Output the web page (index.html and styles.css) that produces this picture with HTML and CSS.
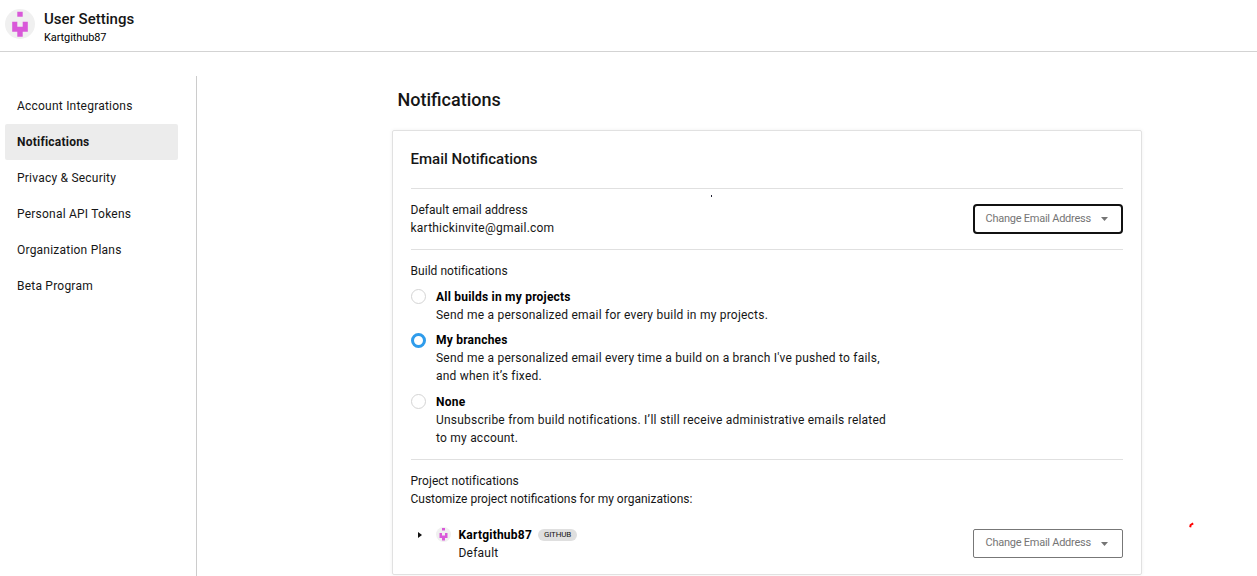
FILE: index.html
```html
<!DOCTYPE html>
<html lang="en">
<head>
<meta charset="utf-8">
<title>User Settings</title>
<link rel="stylesheet" href="styles.css">
</head>
<body>
<header class="topbar">
  <svg class="avatar" viewBox="0 0 30 30"><circle cx="15" cy="15" r="15" fill="#f0f0f0"/><path fill="#d959d9" d="M12.3 2.7h5.4v5h-5.4zM7.2 12.7h5.1v5h5.4v-5h5.1v10h-5.1v5h-5.4v-5H7.2z"/></svg>
  <div>
    <h1 class="topbar-title">User Settings</h1>
    <div class="topbar-user">Kartgithub87</div>
  </div>
</header>
<div class="layout">
  <nav class="sidebar">
    <a class="nav-item">Account Integrations</a>
    <a class="nav-item active">Notifications</a>
    <a class="nav-item">Privacy &amp; Security</a>
    <a class="nav-item">Personal API Tokens</a>
    <a class="nav-item">Organization Plans</a>
    <a class="nav-item">Beta Program</a>
  </nav>
  <main class="content">
    <h2 class="page-title">Notifications</h2>
    <section class="card">
      <h3 class="card-title">Email Notifications</h3>
      <div class="row email-row">
        <div>
          <div class="label">Default email address</div>
          <div class="text">karthickinvite@gmail.com</div>
        </div>
        <button class="button focused"><span class="button-label">Change Email Address</span><svg class="caret" viewBox="0 0 7 4"><path d="M0 0h7L3.5 4z"/></svg></button>
      </div>
      <div class="builds">
        <div class="label label-build">Build notifications</div>
        <div class="option">
          <span class="radio"></span>
          <div><div class="strong">All builds in my projects</div><div class="text">Send me a personalized email for every build in my projects.</div></div>
        </div>
        <div class="option">
          <span class="radio checked"></span>
          <div><div class="strong">My branches</div><div class="text">Send me a personalized email every time a build on a branch I've pushed to fails,<br>and when it’s fixed.</div></div>
        </div>
        <div class="option last">
          <span class="radio"></span>
          <div><div class="strong">None</div><div class="text">Unsubscribe from build notifications. I’ll still receive administrative emails related<br>to my account.</div></div>
        </div>
      </div>
      <div class="projects">
        <div class="label">Project notifications</div>
        <div class="text tight">Customize project notifications for my organizations:</div>
        <div class="row org-row">
          <div class="org">
            <svg class="disclosure" viewBox="0 0 4 6"><path d="M0 0l4 3-4 3z"/></svg>
            <svg class="avatar-small" viewBox="0 0 30 30"><circle cx="15" cy="15" r="15" fill="#f0f0f0"/><path fill="#d959d9" d="M12 2h6v5h-6zM7 12h5v5h6v-5h5v10h-5v5h-6v-5H7z"/></svg>
            <div>
              <div class="org-head"><span class="strong">Kartgithub87</span><span class="badge">GITHUB</span></div>
              <div class="text">Default</div>
            </div>
          </div>
          <button class="button"><span class="button-label">Change Email Address</span><svg class="caret" viewBox="0 0 7 4"><path d="M0 0h7L3.5 4z"/></svg></button>
        </div>
      </div>
    </section>
  </main>
</div>
<span class="dot"></span>
<svg class="red-mark" viewBox="0 0 5 6"><path d="M1.2 5.2L1.6 3 4.2 1.4" fill="none" stroke="#f00" stroke-width="2"/></svg>
</body>
</html>
```
FILE: styles.css
```css
* { box-sizing: border-box; }
body { margin: 0; height: 576px; overflow: hidden; background: #fff; color: #161616; font: 12px/18px Roboto, sans-serif; }
h1, h2, h3 { margin: 0; font-weight: 500; }
.topbar { height: 52px; display: flex; gap: 9px; padding: 9px 5px; border-bottom: 1px solid #d3d3d3; }
.avatar { width: 30px; height: 30px; }
.topbar-title { font-size: 15px; line-height: 20px; width: max-content; }
.topbar-user { font-size: 11px; line-height: 18px; width: max-content; letter-spacing: -.1px; color: #000; }
.layout { display: flex; height: 500px; margin-top: 24px; }
.sidebar { width: 197px; border-right: 1px solid #ccc; padding: 12px 18px 0 5px; }
.nav-item { display: block; height: 36px; padding: 0 12px; line-height: 36px; border-radius: 2px; letter-spacing: .22px; white-space: nowrap; }
.active { background: #ececec; font-weight: 700; letter-spacing: .23px; }
.content { width: 750px; margin-left: 195px; }
.page-title { font-size: 18px; line-height: 24px; padding: 12px 0 0 5.5px; margin-bottom: 18px; }
.card { height: 445px; border: 1px solid #e1e1e1; border-radius: 2px; box-shadow: 0 0 4px rgba(0,0,0,.06); padding: 17px 18px 0 17.5px; }
.card-title { font-size: 15px; line-height: 22px; height: 40px; }
.row { display: flex; justify-content: space-between; }
.email-row { height: 61px; border-top: 1px solid #e0e0e0; padding-top: 12px; }
.label, .text, .strong { white-space: nowrap; width: max-content; }
.label { letter-spacing: .04px; }
.text { letter-spacing: .22px; }
.tight { letter-spacing: 0; }
.strong { font-weight: 700; letter-spacing: .22px; color: #000; }
.button { width: 150px; height: 29px; margin: 0; padding: 0 14px 1px 12px; display: flex; justify-content: space-between; align-items: center; background: #fff; border: 1px solid #777; border-radius: 2px; color: #757575; font: 11px/16px Roboto, sans-serif; }
.button-label { letter-spacing: -.25px; margin-left: -.5px; margin-top: -1px; }
.focused { height: 30px; margin-top: 3px; border: 2px solid #111; border-radius: 4px; padding: 0 13px 1px 11px; }
.focused .button-label { margin-top: 1px; }
.caret { width: 7px; height: 4px; fill: #757575; margin-top: 1px; }
.builds { height: 210px; border-top: 1px solid #e0e0e0; padding-top: 12px; }
.label-build { margin-bottom: 8px; }
.option { display: flex; gap: 10px; margin-bottom: 7px; }
.option.last { margin-top: 8px; }
.radio { width: 15px; height: 15px; border: 1px solid #d4d4d4; border-radius: 50%; margin: 1px 0 0 .5px; }
.checked { border: 3px solid #2f9ceb; margin-top: 2px; }
.projects { border-top: 1px solid #e0e0e0; padding-top: 12px; }
.org-row { margin-top: 18px; }
.org-row .button { margin-top: 3px; }
.org { display: flex; padding-left: 7.5px; }
.disclosure { width: 4px; height: 6px; margin: 6px 14px 0 0; fill: #111; }
.avatar-small { width: 15px; height: 15px; margin: 1px 7.5px 0 0; }
.org-head { display: flex; align-items: center; gap: 6px; }
.badge { height: 12px; padding: 0 6px; border-radius: 6px; background: #dfdfdf; font-size: 8px; line-height: 11px; letter-spacing: -.2px; }
.dot { position: absolute; left: 711px; top: 195px; width: 1px; height: 2px; background: #223; }
.red-mark { position: absolute; left: 1189px; top: 522px; width: 5px; height: 6px; }
```
